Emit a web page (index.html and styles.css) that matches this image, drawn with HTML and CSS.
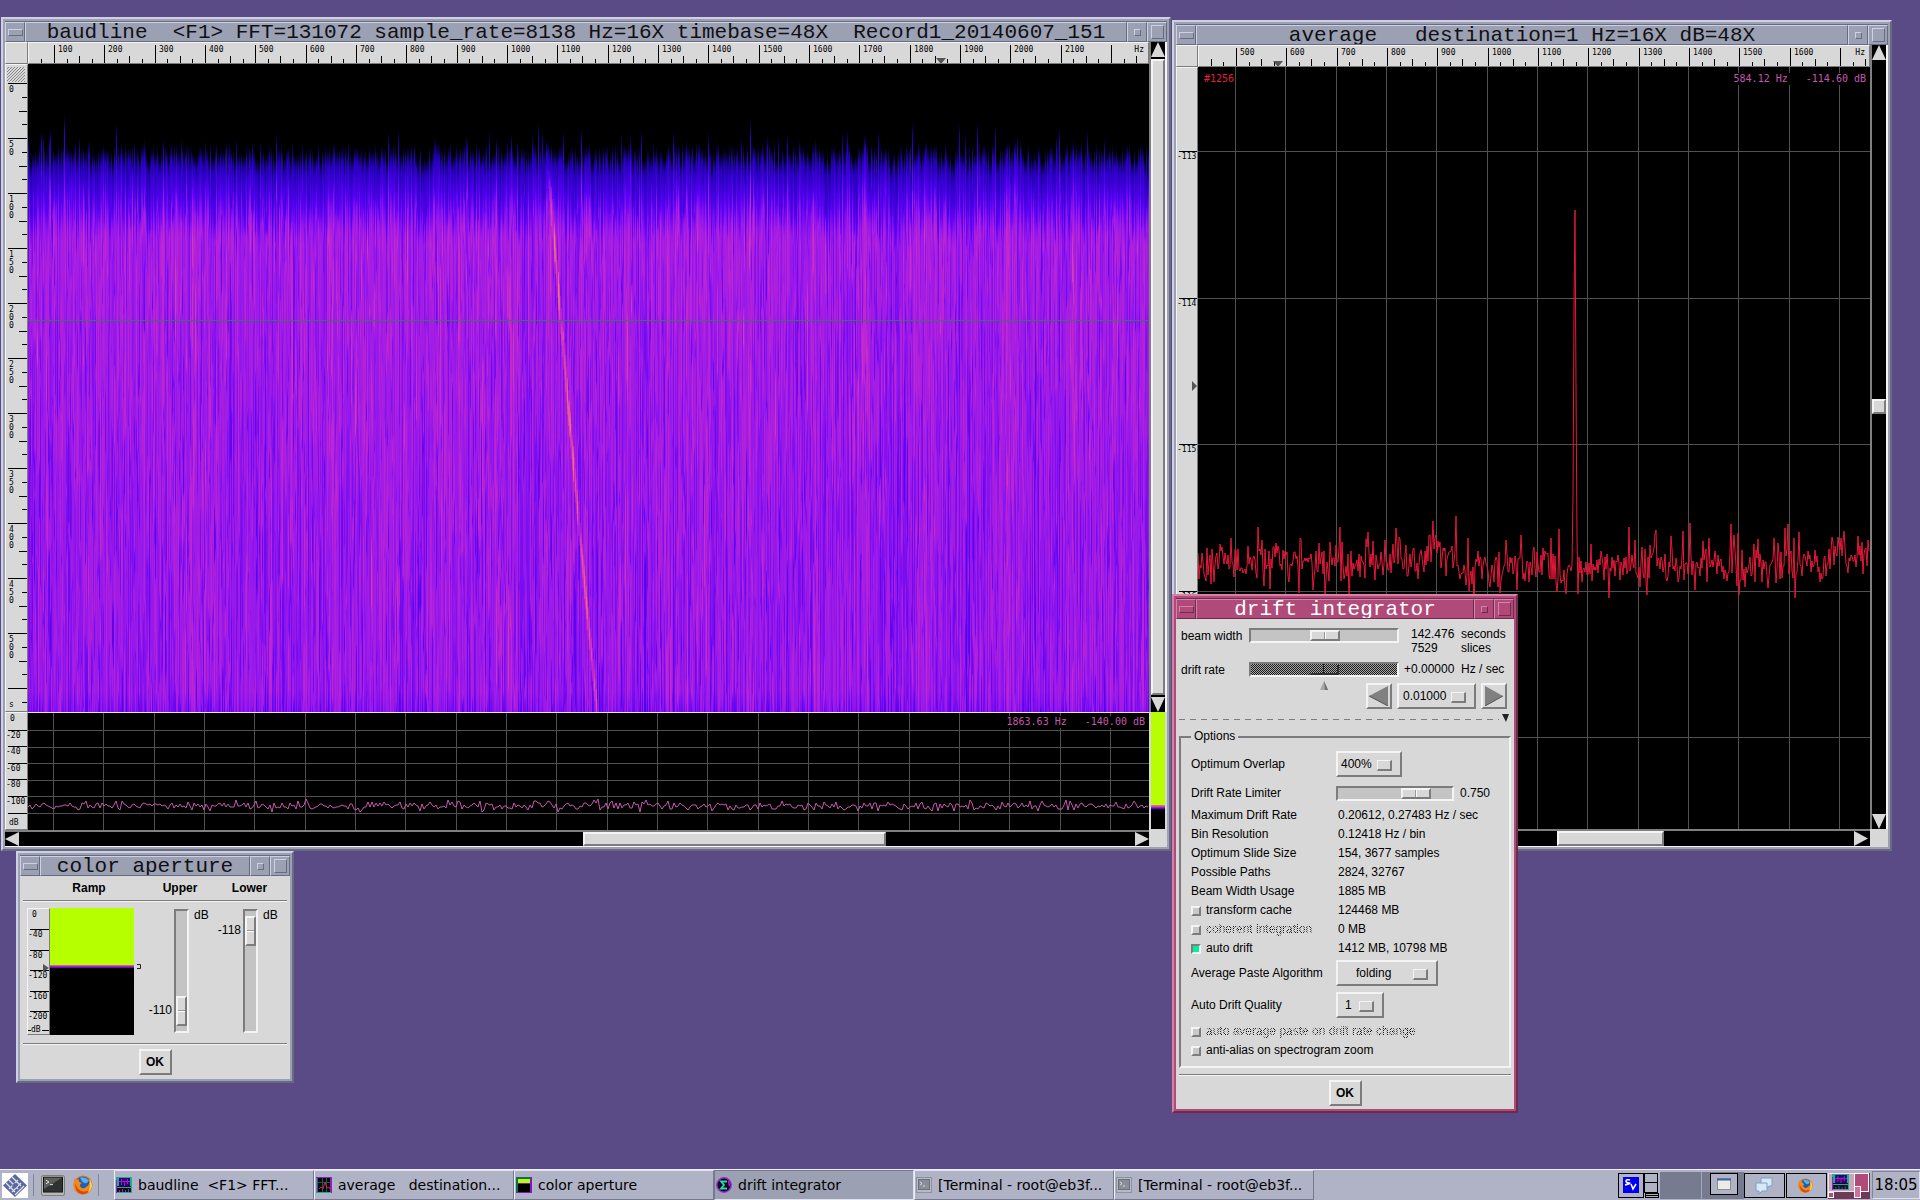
FILE: index.html
```html
<!DOCTYPE html>
<html lang="en">
<head>
<meta charset="utf-8">
<title>baudline</title>
<link rel="stylesheet" href="styles.css">
</head>
<body>
<svg class="defs" aria-hidden="true">
  <symbol id="firefox" viewBox="0 0 20 20">
    <circle cx="10" cy="10" r="9.5" fill="#e8761c"/>
    <circle cx="10" cy="8.500" r="7" fill="#1f5fae"/>
    <path d="M7 2.500Q12 1 16 5.500Q14 9 11 8Q8 6 7 2.500Z" fill="#58b0e8"/>
    <path d="M1.500 3Q3 5 6 4.500Q5 7 9 8Q6 9.500 7.500 12Q10 14.500 13 12Q17 10 16.500 4Q20 9 18.500 13Q16 19.500 10 19.500Q1 19 .5 10Q.5 6 1.500 3Z" fill="#f08a1d"/>
    <path d="M2 8Q4 15 10 16.500Q15 17 18 13Q15 19.500 9 19.200Q2 18 2 8Z" fill="#d64a12"/>
    <path d="M16.500 4Q20 9 18.500 13Q17.500 16 15 17.500Q18 11 16.500 4Z" fill="#fbd14a"/>
  </symbol>
  <symbol id="term" viewBox="0 0 24 24" preserveAspectRatio="none">
    <rect x=".5" y=".5" width="23" height="23" rx="2" fill="#b9b9b4" stroke="#77776f"/>
    <rect x="2.500" y="2.500" width="19" height="17" fill="#2e3230" stroke="#161816"/>
    <path d="M3 3H21L3 16Z" fill="#5c605c"/>
    <path d="M5 6l3 2-3 2M9 11h3" stroke="#e6e6e6" fill="none"/>
  </symbol>
  <symbol id="spectrum" viewBox="0 0 16 16" preserveAspectRatio="none">
    <rect width="16" height="16" fill="#18b090"/>
    <rect x="3" y="1" width="11" height="8" fill="#32006e"/>
    <path d="M3 4.500h11M5.500 2v6M8.500 4v5M11.500 2v5" stroke="#9a1cc8"/>
    <rect x="1" y="11" width="14" height="4" fill="#101018"/>
    <path d="M0 9.500H15" stroke="#0c0c30"/>
    <path d="M3.500 15v-2M6.500 15v-3M9.500 15v-2M12.500 15v-3" stroke="#9a1cc8"/>
    <path d="M.5 3V16" stroke="#9a1cc8"/>
  </symbol>
  <symbol id="avg" viewBox="0 0 16 16">
    <rect width="16" height="16" fill="#8a24b8"/>
    <rect x="2" y="1" width="12" height="14" fill="#08080c"/>
    <path d="M0 15.500H15M.5 1V15" stroke="#18b090"/>
    <path d="M2 5.500H14M6.500 1V15M10.500 1V15" stroke="#185c4c"/>
    <path d="M3 12l2-2 2 2 2-7 2 6 2-1 1 2" stroke="#d02040" fill="none"/>
  </symbol>
  <symbol id="ramp" viewBox="0 0 16 16">
    <rect width="16" height="16" fill="#8018c0"/>
    <path d="M0 0H15V2H2V15H0Z" fill="#0c7050"/>
    <rect x="2" y="2" width="12" height="4" fill="#b6ff00"/>
    <rect x="2" y="7" width="12" height="8" fill="#000"/>
  </symbol>
  <symbol id="sigma" viewBox="0 0 16 16">
    <circle cx="8" cy="8" r="7.200" fill="#12001e" stroke="#a028c8" stroke-width="1.500"/>
    <path d="M11 4.500H5L8 8 5 11.500H11" stroke="#18e0b0" stroke-width="1.800" fill="none"/>
    <path d="M12.500 4L13.500 9" stroke="#a028c8" stroke-width="1.500"/>
  </symbol>
  <symbol id="termgray" viewBox="0 0 16 16">
    <rect x=".5" y=".5" width="15" height="15" fill="#b7bac6" stroke="#8d91a0"/>
    <rect x="2.500" y="2.500" width="11" height="10" fill="#8a8e98" stroke="#6d717c"/>
    <path d="M4 5l2 1.500L4 8M7 9h2" stroke="#d8dae2" fill="none"/>
  </symbol>
</svg>

<main class="desktop">
  <section class="win win-average" aria-label="average">
    <header class="titlebar">
      <button class="tb tb-menu" aria-label="Menu"></button>
      <h1 class="title">average   destination=1 Hz=16X dB=48X</h1>
      <button class="tb tb-min" aria-label="Minimize"></button>
      <button class="tb tb-max" aria-label="Maximize"></button>
    </header>
    <div class="scope scope-average">
      <div class="corner"></div>
      <svg class="ruler ruler-h" id="avg-freq"></svg>
      <div class="scroll-v scroll-v-avg">
        <button class="arrow up" aria-label="Scroll up"></button>
        <div class="rail"><div class="thumb thumb-gain"></div></div>
        <button class="arrow down" aria-label="Scroll down"></button>
      </div>
      <svg class="ruler ruler-v" id="avg-db"></svg>
      <div class="plot">
        <svg class="graph" id="avg-graph"></svg>
        <span class="overlay overlay-left">#1256</span>
        <span class="overlay overlay-right">584.12 Hz   -114.60 dB</span>
      </div>
      <div class="scroll-h">
        <button class="arrow left" aria-label="Scroll left"></button>
        <div class="rail"><div class="thumb thumb-avg"></div></div>
        <button class="arrow right" aria-label="Scroll right"></button>
      </div>
    </div>
  </section>

  <section class="win win-baudline" aria-label="baudline">
    <header class="titlebar">
      <button class="tb tb-menu" aria-label="Menu"></button>
      <h1 class="title">baudline  &lt;F1&gt; FFT=131072 sample_rate=8138 Hz=16X timebase=48X  Record1_20140607_151</h1>
      <button class="tb tb-min" aria-label="Minimize"></button>
      <button class="tb tb-max" aria-label="Maximize"></button>
    </header>
    <div class="scope scope-baudline">
      <div class="corner"></div>
      <svg class="ruler ruler-h" id="main-freq"></svg>
      <div class="scroll-v">
        <button class="arrow up" aria-label="Scroll up"></button>
        <div class="rail"><div class="thumb thumb-full"></div></div>
        <button class="arrow down" aria-label="Scroll down"></button>
      </div>
      <svg class="ruler ruler-v" id="main-time"></svg>
      <div class="plot"><canvas class="graph" id="spectrogram"></canvas></div>
      <svg class="ruler ruler-v" id="main-db"></svg>
      <div class="plot plot-spectrum">
        <svg class="graph" id="main-graph"></svg>
        <span class="overlay overlay-right">1863.63 Hz   -140.00 dB</span>
      </div>
      <div class="mini-ramp"></div>
      <div class="scroll-h">
        <button class="arrow left" aria-label="Scroll left"></button>
        <div class="rail"><div class="thumb thumb-main"></div></div>
        <button class="arrow right" aria-label="Scroll right"></button>
      </div>
    </div>
  </section>

  <section class="win win-aperture" aria-label="color aperture">
    <header class="titlebar">
      <button class="tb tb-menu" aria-label="Menu"></button>
      <h1 class="title">color aperture</h1>
      <button class="tb tb-min" aria-label="Minimize"></button>
      <button class="tb tb-max" aria-label="Maximize"></button>
    </header>
    <div class="panel">
      <div class="heads"><b>Ramp</b><label for="upper">Upper</label><label for="lower">Lower</label></div>
      <div class="aperture">
        <svg class="ruler ruler-ramp" id="ramp-db"></svg>
        <div class="ramp"></div>
        <svg class="bracket" viewBox="0 0 4 6"><path d="M0 .5H3.500V4.500H0" fill="none" stroke="#222"/></svg>
        <output class="vout vout-upper" for="upper">-110</output>
        <input class="slider slider-v" id="upper" type="range" min="0" max="100" value="6">
        <span class="unit">dB</span>
        <output class="vout vout-lower" for="lower">-118</output>
        <input class="slider slider-v" id="lower" type="range" min="0" max="100" value="94">
        <span class="unit">dB</span>
      </div>
      <div class="actions"><button class="push">OK</button></div>
    </div>
  </section>

  <section class="win win-drift active" aria-label="drift integrator">
    <header class="titlebar">
      <button class="tb tb-menu" aria-label="Menu"></button>
      <h1 class="title">drift integrator</h1>
      <button class="tb tb-min" aria-label="Minimize"></button>
      <button class="tb tb-max" aria-label="Maximize"></button>
    </header>
    <div class="panel">
      <div class="top-grid">
        <label for="beam">beam width</label>
        <input class="slider" id="beam" type="range" min="0" max="100" value="51">
        <div class="beam-values"><span>142.476</span><span>seconds</span><span>7529</span><span>slices</span></div>
        <label for="rate">drift rate</label>
        <input class="slider" id="rate" type="range" min="0" max="100" value="50" disabled>
        <div class="rate-values"><span>+0.00000</span><span>Hz / sec</span></div>
      </div>
      <div class="stepper">
        <svg class="pointer" viewBox="0 0 8 9"><path d="M4 0L8 9H0Z" fill="#a8a8a8"/><path d="M4 0L8 9H5Z" fill="#707070"/></svg>
        <button class="push step" aria-label="Decrease drift rate"><svg viewBox="0 0 20 20"><path d="M0 10L19 0V20Z" fill="#808080"/><path d="M0 10L19 20" stroke="#555"/></svg></button>
        <span class="option option-step"><select aria-label="Step"><option>0.01000</option></select></span>
        <button class="push step" aria-label="Increase drift rate"><svg viewBox="0 0 20 20"><path d="M19 10L1 0V20Z" fill="#808080"/><path d="M19 10L1 20" stroke="#555"/></svg></button>
      </div>
      <div class="tear"><svg viewBox="0 0 7 8"><path d="M0 0H7L4 8Z" fill="#222"/></svg></div>
      <fieldset class="options">
        <legend>Options</legend>
        <div class="row tall"><label for="overlap">Optimum Overlap</label><span class="option option-overlap"><select id="overlap"><option>400%</option></select></span></div>
        <div class="row mid"><label for="limiter">Drift Rate Limiter</label><input class="slider slider-short" id="limiter" type="range" min="0" max="100" value="75"><output for="limiter">0.750</output></div>
        <div class="row"><span>Maximum Drift Rate</span><span class="val">0.20612, 0.27483 Hz / sec</span></div>
        <div class="row"><span>Bin Resolution</span><span class="val">0.12418 Hz / bin</span></div>
        <div class="row"><span>Optimum Slide Size</span><span class="val">154, 3677 samples</span></div>
        <div class="row"><span>Possible Paths</span><span class="val">2824, 32767</span></div>
        <div class="row"><span>Beam Width Usage</span><span class="val">1885 MB</span></div>
        <div class="row"><label><input type="checkbox">transform cache</label><span class="val">124468 MB</span></div>
        <div class="row"><label class="off"><input type="checkbox" disabled><span>coherent integration</span></label><span class="val">0 MB</span></div>
        <div class="row"><label><input type="checkbox" checked>auto drift</label><span class="val">1412 MB, 10798 MB</span></div>
        <div class="row tall"><label for="paste">Average Paste Algorithm</label><span class="option option-paste"><select id="paste"><option>folding</option></select></span></div>
        <div class="row tall"><label for="quality">Auto Drift Quality</label><span class="option option-quality"><select id="quality"><option>1</option></select></span></div>
        <div class="row wide"><label class="off"><input type="checkbox" disabled><span>auto average paste on drift rate change</span></label></div>
        <div class="row wide"><label><input type="checkbox">anti-alias on spectrogram zoom</label></div>
      </fieldset>
      <div class="actions"><button class="push">OK</button></div>
    </div>
  </section>
</main>

<footer class="taskbar">
  <div class="launch">
    <button class="start" aria-label="Applications"><svg viewBox="0 0 26 25"><rect width="26" height="25" fill="#fff"/><path d="M13 1L25 12.500 13 24 1 12.500Z" fill="#5a68a0"/><path d="M7 7L16 16M10 4L19 13M4 10L13 19M16 7L7 16M19 10L10 19M22 13L13 22" stroke="#dfe2f2" stroke-width="1.200" fill="none"/><path d="M10 12.500L13 9.500 16 12.500 13 15.500Z" fill="#5a68a0"/></svg></button>
    <i class="sep"></i>
    <button class="quick" aria-label="Terminal"><svg width="24" height="21"><use href="#term"/></svg></button>
    <button class="quick" aria-label="Firefox"><svg width="20" height="20"><use href="#firefox"/></svg></button>
    <i class="sep"></i>
  </div>
  <nav class="tasks">
    <button class="task"><svg width="16" height="16"><use href="#spectrum"/></svg>baudline  &lt;F1&gt; FFT...</button>
    <button class="task"><svg width="16" height="16"><use href="#avg"/></svg>average   destination...</button>
    <button class="task"><svg width="16" height="16"><use href="#ramp"/></svg>color aperture</button>
    <button class="task current"><svg width="16" height="16"><use href="#sigma"/></svg>drift integrator</button>
    <button class="task"><svg width="16" height="16"><use href="#termgray"/></svg>[Terminal - root@eb3f...</button>
    <button class="task"><svg width="16" height="16"><use href="#termgray"/></svg>[Terminal - root@eb3f...</button>
  </nav>
  <div class="tray">
    <svg class="pager" width="252" height="27" viewBox="0 0 252 27" role="img" aria-label="Workspaces">
      <rect x="42" width="84" height="27" fill="#777b90"/>
      <path d="M83.500 0V27" stroke="#a4a7ba"/>
      <g fill="#b0b3c6" stroke="#000"><rect x=".5" y="1.500" width="25" height="24"/><rect x="26.500" y="1.500" width="13" height="9"/><rect x="26.500" y="10.500" width="13" height="10"/><rect x="27.500" y="21.500" width="13" height="4"/><path d="M27 23.500H41"/><rect x="92.500" y="1.500" width="27" height="21"/><rect x="126.500" y="1.500" width="40" height="24"/><rect x="168.500" y="1.500" width="40" height="24"/></g>
      <rect x="5" y="5" width="16" height="16" fill="#0000ee"/>
      <path d="M12 8Q8 7 8 9T11 11T7 13M13 12L15 17 18 12" stroke="#fff" stroke-width="1.500" fill="none"/>
      <rect x="99.500" y="6.500" width="13" height="11" fill="#ecece6" stroke="#8b8f90"/><path d="M99 7.500H113" stroke="#3a65a8" stroke-width="2"/>
      <path d="M143 6h11v8h-3l-2 3v-3h-6z" fill="#d7e8f6" stroke="#7f9fc0"/><path d="M138 11h11v8h-5l-3 3v-3h-3z" fill="#d7e8f6" stroke="#7f9fc0"/>
      <use href="#firefox" x="180" y="6" width="15" height="15"/>
      <rect x="210" y="1" width="42" height="26" fill="#6f3a58"/>
      <rect x="210.500" y="1.500" width="26" height="18" fill="#c7a6bc" stroke="#e8e4f0"/>
      <use href="#spectrum" x="214" y="2" width="17" height="16"/>
      <rect x="236.500" y="1.500" width="14" height="18" fill="#b04a78" stroke="#fff"/>
      <rect x="236.500" y="14.500" width="6" height="11" fill="#d070a0" stroke="#fff"/>
      <rect x="210.500" y="20.500" width="5" height="5" fill="#b04a78" stroke="#fff"/>
    </svg>
    <time class="clock">18:05</time>
  </div>
</footer>
<script src="script.js"></script>
</body>
</html>
```
FILE: styles.css
```css
* { box-sizing: border-box; }
html, body { height: 100%; }
body {
  --face: #9ba0b2; --light: #cfd1e3; --dark: #686c80;
  --gray: #d8d8d8; --hi: #f4f4f4; --lo: #7c7c7c;
  margin: 0; display: flex; flex-direction: column; overflow: hidden;
  background: #5a4a85; color: #000;
  font: 12px/15px "Liberation Sans", Arial, sans-serif;
}
button, select, input { font: inherit; color: inherit; margin: 0; padding: 0; border-radius: 0; }
.defs { display: none; }
.desktop { flex: 1; position: relative; overflow: hidden; min-height: 0; }

/* Window frames */
.win {
  position: absolute; display: flex; flex-direction: column;
  padding: 2px; background: var(--face);
  border: 2px solid; border-color: var(--light) var(--dark) var(--dark) var(--light);
}
.win::before { content: ""; height: 1px; flex: none; background: var(--dark); }
.win-baudline { left: 1px; top: 17px; width: 1170px; height: 834px; }
.win-average { left: 1172px; top: 20px; width: 720px; height: 831px; }
.win-aperture { left: 16px; top: 851px; width: 278px; height: 232px; }
.win-drift { left: 1172px; top: 594px; width: 346px; height: 519px; }
.active { --face: #b04a78; --light: #d880a8; --dark: #6e2c4c; }
.titlebar {
  flex: none; height: 20px; display: flex; background: var(--face);
}
.title {
  flex: 1; min-width: 0; margin: 0; overflow: hidden; text-align: center; white-space: pre;
  font: 400 21px/19px "Liberation Mono", "Courier New", monospace; color: #101014;
  border: 1px solid; border-color: var(--light) var(--dark) var(--dark) var(--light);
}
.active .title { color: #fff; }
.tb {
  width: 20px; height: 20px; display: grid; place-items: center; background: var(--face);
  border: 1px solid; border-color: var(--light) var(--dark) var(--dark) var(--light);
}
.tb::before { content: ""; border: 1px solid; border-color: var(--light) var(--dark) var(--dark) var(--light); }
.tb-menu::before { width: 13px; height: 5px; }
.tb-min::before { width: 5px; height: 5px; }
.tb-max::before { width: 11px; height: 12px; }

/* Signal displays */
.scope { flex: 1; min-height: 0; display: grid; background: var(--gray); }
.scope-baudline { grid-template: 22px 1fr 118px 17px / 23px 1fr 18px; }
.scope-average { grid-template: 22px 1fr 18px / 22px 1fr 18px; }
.corner, .ruler { background: var(--gray); border: 1px solid; border-color: var(--hi) var(--lo) var(--lo) var(--hi); }
.ruler { display: block; width: 100%; height: 100%; overflow: hidden; font: 8px "DejaVu Sans Mono", monospace; }
.plot { position: relative; background: #000; min-width: 0; min-height: 0; overflow: hidden; }
.plot-spectrum { border-top: 1px solid #f0e0ff; }
.graph { display: block; width: 100%; height: 100%; }
.overlay {
  position: absolute; top: 3px; white-space: pre; background: #000; color: #c458ac;
  font: 10px/12px "DejaVu Sans Mono", monospace;
}
.overlay-right { right: 4px; }
.overlay-left { left: 6px; color: #e02040; }
.scope-average .overlay { top: 6px; }
.scroll-v { grid-column: 3; grid-row: 1 / 3; display: flex; flex-direction: column; background: #000; border: solid; border-width: 0 2px; border-color: #808080 var(--hi) #808080 #808080; }
.scroll-h { grid-column: 1 / 3; display: flex; background: #000; border-top: 2px solid #808080; border-bottom: 1px solid var(--hi); }
.scope-average .scroll-h { padding: 0 2px; }
.rail { flex: 1; display: flex; }
.scroll-v .rail { flex-direction: column; padding: 2px 0; }
.thumb { background: var(--gray); border: 2px solid; border-color: var(--hi) var(--lo) var(--lo) var(--hi); }
.thumb-full { flex: 1; }
.thumb-gain { height: 15px; margin-top: 337px; }
.thumb-main { width: 303px; margin-left: 564px; }
.thumb-avg { width: 107px; margin-left: 365px; }
.arrow { flex: none; border: 0; background: var(--gray); }
.scroll-v .arrow { width: 100%; height: 15px; }
.scroll-h .arrow { width: 14px; }
.up { clip-path: polygon(50% 0, 100% 100%, 0 100%); }
.down { clip-path: polygon(0 0, 100% 0, 50% 100%); }
.left { clip-path: polygon(0 50%, 100% 0, 100% 100%); }
.right { clip-path: polygon(0 0, 100% 50%, 0 100%); }
.mini-ramp {
  margin: 0 2px 1px 2px;
  background: linear-gradient(#b6ff00 93px, #f08060 93px, #c030d0 95px, #3000a0 97px, #000 98px);
}

/* Dialog panels */
.panel { flex: 1; display: flex; flex-direction: column; background: var(--gray); }
.win-aperture .panel { padding: 0 3px 0 3px; }
.heads { display: grid; grid-template-columns: 132px 50px 1fr; height: 25px; align-items: center; text-align: center; border-bottom: 1px solid var(--lo); box-shadow: 0 1px var(--hi); font-weight: 700; }
.heads label:last-child { padding-left: 7px; }
.aperture { display: flex; align-items: flex-start; height: 142px; padding: 7px 0 0 4px; }
.ruler-ramp { width: 23px; height: 127px; flex: none; }
.ramp { width: 84px; height: 127px; flex: none; background: linear-gradient(#b6ff00 57px, #f08060 57px, #c030d0 58px, #5000c0 60px, #000 60px); }
.bracket { width: 4px; height: 6px; margin: 56px 0 0 3px; flex: none; }
.vout { width: 33px; text-align: right; padding-right: 2px; flex: none; }
.vout-upper { margin-top: 95px; }
.vout-lower { margin-top: 15px; }
.unit { width: 16px; margin-left: 5px; }
.actions { display: flex; justify-content: center; padding-top: 5px; border-top: 1px solid var(--lo); box-shadow: inset 0 1px var(--hi); }
.push {
  width: 33px; height: 26px; background: var(--gray); font-weight: 700;
  border: 2px solid; border-color: var(--hi) var(--lo) var(--lo) var(--hi);
}
.slider {
  appearance: none; width: 150px; height: 15px; background: #c4c4c4;
  border: 2px solid; border-color: var(--lo) var(--hi) var(--hi) var(--lo);
}
.slider::-webkit-slider-thumb {
  appearance: none; width: 30px; height: 11px; border: 2px solid;
  border-color: var(--hi) var(--lo) var(--lo) var(--hi);
  background: linear-gradient(90deg, var(--gray) 12px, #999 12px, #999 13px, #fff 13px, #fff 14px, var(--gray) 14px);
}
.slider-short { width: 118px; }
.slider-v { writing-mode: vertical-lr; direction: rtl; width: 15px; height: 124px; margin-top: 1px; flex: none; }
.slider-v::-webkit-slider-thumb {
  width: 11px; height: 30px;
  background: linear-gradient(var(--gray) 12px, #999 12px, #999 13px, #fff 13px, #fff 14px, var(--gray) 14px);
}
.slider:disabled { background: repeating-conic-gradient(#1c1c1c 0 25%, #a8a8a8 0 50%) 0 0 / 2px 2px; }
.slider:disabled::-webkit-slider-thumb {
  background: linear-gradient(90deg, transparent 12px, #222 12px, #222 13px, transparent 13px);
  border-color: transparent #303030 #303030 transparent;
}

/* Drift integrator */
.win-drift .panel { padding: 0 3px; }
.top-grid { display: grid; grid-template-columns: 68px 150px 1fr; grid-template-rows: 34px 22px; padding: 6px 0 0 2px; align-items: start; }
.top-grid .slider { margin-top: 3px; }
.top-grid label { padding-top: 4px; }
.beam-values { display: grid; grid-template-columns: 50px 1fr; padding: 2px 0 0 12px; line-height: 14px; }
.rate-values { display: grid; grid-template-columns: 57px 1fr; padding: 3px 0 0 5px; }
.stepper { display: flex; align-items: flex-end; gap: 5px; height: 28px; padding: 0 2px 0 141px; }
.pointer { width: 8px; height: 9px; margin-right: 33px; flex: none; align-self: flex-start; }
.step { width: 26px; flex: none; display: grid; place-items: center; }
.step svg { width: 20px; height: 20px; }
.option { position: relative; display: block; height: 26px; flex: none; }
.option select {
  appearance: none; width: 100%; height: 100%; background: var(--gray); outline: 0;
  border: 2px solid; border-color: var(--hi) var(--lo) var(--lo) var(--hi); padding: 0 4px;
}
.option::after {
  content: ""; position: absolute; right: 10px; top: 9px; width: 12px; height: 8px;
  background: var(--gray); border: 2px solid; border-color: var(--hi) var(--lo) var(--lo) var(--hi);
  border-width: 1px 2px 2px 1px;
}
.option-step { width: 79px; }
.option-overlap { width: 66px; }
.option-overlap select { padding: 0 3px; }
.option-paste { width: 102px; }
.option-paste select { padding: 0 18px; }
.option-quality { width: 48px; }
.option-quality select { padding: 0 7px; }
.tear {
  height: 16px; margin-top: 1px; display: flex; justify-content: flex-end; align-items: center; padding-right: 2px;
  background: repeating-linear-gradient(90deg, var(--lo) 0 6px, transparent 6px 11px) 0 9px / calc(100% - 12px) 1px no-repeat;
}
.tear svg { width: 7px; height: 8px; }
.options {
  min-width: 0; margin: 3px 0 6px; padding: 5px 0 6px 10px;
  border: 2px solid; border-color: var(--lo) var(--hi) var(--hi) var(--lo);
}
.options legend { padding: 0 3px; line-height: 15px; }
.row { height: 19px; display: grid; grid-template-columns: 145px auto 1fr; align-items: center; white-space: nowrap; }
.row.tall { height: 32px; padding-bottom: 2px; }
.row.mid { height: 25px; }
.row.wide { grid-template-columns: 1fr; }
.row output { padding-left: 6px; }
.val { padding-left: 2px; }
.row label { display: flex; align-items: center; }
input[type="checkbox"] {
  appearance: none; width: 10px; height: 10px; margin: 0 5px 0 0; background: #c8c8c8;
  border: 2px solid; border-color: var(--hi) var(--lo) var(--lo) var(--hi);
}
input[type="checkbox"]:checked { background: #00f0a0; border-color: var(--lo) var(--hi) var(--hi) var(--lo); }
.off span { color: transparent; background: repeating-conic-gradient(#000 0 25%, transparent 0 50%) 0 0 / 2px 2px; background-clip: text; }

/* Taskbar */
.taskbar {
  flex: none; height: 31px; display: flex; align-items: stretch; background: #b0b3c6; border-top: 1px solid #eceefa;
  font: 14px/18px "DejaVu Sans", sans-serif;
}
.launch { width: 114px; display: flex; align-items: center; padding-left: 2px; flex: none; }
.start, .quick { border: 0; background: none; display: block; line-height: 0; }
.start svg { width: 26px; height: 25px; }
.sep { width: 1px; height: 22px; background: #8084a0; margin: 0 7px 0 5px; }
.quick + .quick { margin-left: 8px; }
.tasks { flex: 1; display: flex; min-width: 0; }
.task {
  flex: 0 1 200px; min-width: 0; display: flex; align-items: center; gap: 6px; overflow: hidden; white-space: pre;
  background: #b0b3c6; padding: 0 1px; text-align: left;
  border: 1px solid; border-color: #dfe1ee #747890 #747890 #eceefa;
}
.task svg { flex: none; }
.current { background: #9ba0b2; border-color: #747890 #dfe1ee #dfe1ee #747890; }
.tray { display: flex; align-items: center; flex: none; gap: 2px; }
.clock { width: 48px; height: 28px; font-size: 15px; line-height: 27px; text-align: center; border: 1px solid; border-color: #808498 #dfe1ee #dfe1ee #808498; }
```
FILE: script.js
```javascript
const NS = "http://www.w3.org/2000/svg";

// Small seeded generator, so that the displays look the same on each load.
function rng(seed) {
  return () => {
    seed = (seed + 0x6d2b79f5) | 0;
    let t = Math.imul(seed ^ (seed >>> 15), 1 | seed);
    t = (t + Math.imul(t ^ (t >>> 7), 61 | t)) ^ t;
    return ((t ^ (t >>> 14)) >>> 0) / 4294967296;
  };
}

function add(svg, name, attrs, text) {
  const el = document.createElementNS(NS, name);
  for (const k in attrs) el.setAttribute(k, attrs[k]);
  if (text !== undefined) el.textContent = text;
  svg.append(el);
  return el;
}
const get = (id) => document.getElementById(id);
const line = (svg, d, stroke) => add(svg, "path", { d, stroke, fill: "none", "shape-rendering": "crispEdges" });

const STEP = 50.33; // pixels for each 100 Hz

function frequencyRuler(svg, x0, first, last, marker) {
  const w = svg.clientWidth;
  let d = "";
  for (let k = -4; x0 + k * STEP / 4 < w - 2; k++) {
    const x = Math.round(x0 + k * STEP / 4) + 0.5;
    if (x < 2) continue;
    d += `M${x} ${k % 4 === 0 ? 2 : k % 2 === 0 ? 13 : 16}V20`;
  }
  line(svg, d, "#000");
  for (let f = first; f <= last; f += 100) {
    add(svg, "text", { x: Math.round(x0 + (f - first) / 100 * STEP) + 4, y: 9 }, f);
  }
  add(svg, "text", { x: w - 4, y: 9, "text-anchor": "end" }, "Hz");
  add(svg, "path", { d: `M${marker - 5} 15h10l-5 6z`, fill: "#555" });
}

function timeRuler(svg) {
  const h = svg.clientHeight;
  for (let k = -12; k < 20; k += 3) {
    const a = Math.max(k, 1), b = Math.min(k + 15, 19);
    add(svg, "path", { d: `M${a} ${17 - (a - k)}L${b} ${17 - (b - k)}`, stroke: "#888" });
  }
  let d = "";
  for (let k = 0; 18 + k * 13.75 < h - 2; k++) {
    const y = Math.round(18 + k * 13.75) + 0.5;
    d += `M${k % 4 === 0 ? 2 : k % 2 === 0 ? 13 : 16} ${y}H21`;
  }
  line(svg, d, "#000");
  for (let t = 0; t <= 500; t += 50) {
    [...String(t)].forEach((c, i) => add(svg, "text", { x: 3, y: Math.round(27 + t * 1.1 + i * 8) }, c));
  }
  add(svg, "text", { x: 3, y: h - 4 }, "s");
}

function levelRuler(svg, y0, step, labels, x) {
  labels.forEach((label, i) => {
    if (i || x) line(svg, `M2 ${Math.round(y0 + i * step) + 0.5}H21`, "#000");
    add(svg, "text", { x: label === "0" ? 4 : 0, y: Math.round(y0 + i * step) + 8 }, label);
  });
}

function grid(svg, x0, y0, dy) {
  const w = svg.clientWidth, h = svg.clientHeight;
  let d = "";
  for (let x = x0; x < w; x += STEP) d += `M${Math.round(x) + 0.5} 0V${h}`;
  for (let y = y0; y < h; y += dy) d += `M0 ${Math.round(y) + 0.5}H${w}`;
  line(svg, d, "#505050");
}

// Colour map of the spectrogram: black, blue, violet, magenta, orange.
const MAP = [[0, 0, 0, 0], [0.1, 10, 0, 80], [0.25, 40, 0, 190], [0.45, 86, 0, 242], [0.62, 150, 24, 236], [0.8, 196, 40, 205], [1, 250, 110, 110]];
function colour(v) {
  v = Math.max(0, Math.min(1, v));
  let i = 1;
  while (i < MAP.length - 1 && v > MAP[i][0]) i++;
  const a = MAP[i - 1], b = MAP[i], t = (v - a[0]) / (b[0] - a[0]);
  return [1, 2, 3].map((k) => a[k] + (b[k] - a[k]) * t);
}

function spectrogram(cv) {
  const w = cv.width = cv.clientWidth, h = cv.height = cv.clientHeight;
  const ctx = cv.getContext("2d"), img = ctx.createImageData(w, h), r = rng(7);
  let wide = 0;
  for (let x = 0; x < w; x++) {
    wide = wide * 0.75 + (r() - 0.5) * 0.05;
    const col = (r() - 0.5) * 0.06 + wide;
    const spike = r() > 0.93 ? r() * 26 : 0;
    const edge = 98 - r() * 20 - spike - wide * 100;
    let n = 0, target = 0;
    for (let y = 0; y < h; y++) {
      if (r() < 0.025) target = (r() + r() - 1) * 0.17;
      n += (target - n) * 0.15;
      const t = y - edge;
      let v = t < 0 ? 0 : t < 14 ? t / 14 * 0.22 : t < 85 ? 0.22 + (t - 14) / 71 * 0.45 : 0.67 - Math.min(0.045, (t - 85) / 7000);
      if (t > 0) v += (col + n) * Math.min(1, t / 60);
      if (y > h - 22) v -= (y - h + 22) / 22 * 0.06;
      const centre = 520 + (y - 105) * 0.09 - Math.sin((y - 105) / 180) * 1.5;
      const off = Math.abs(x - centre);
      if (y > 105 && off < 1.6) v += 0.26 * (1 - off / 3) * Math.min(1, (y - 95) / 40);
      const c = colour(v), p = (y * w + x) * 4;
      img.data[p] = c[0]; img.data[p + 1] = c[1]; img.data[p + 2] = c[2]; img.data[p + 3] = 255;
    }
  }
  ctx.putImageData(img, 0, 0);
  ctx.fillStyle = "#3f7068";
  ctx.fillRect(0, 256, w, 1);
}

function averageTrace(svg) {
  const r = rng(31), w = svg.clientWidth;
  let d = "", level = 0;
  for (let x = 0; x < w; x++) {
    level = level * 0.82 + (r() - 0.5) * 14;
    let y = 497 + level - (r() - 0.5) * 26 - Math.pow(r(), 7) * 36 + Math.pow(r(), 12) * 24;
    if (x > 374 && x < 380) y = [430, 240, 143, 320, 470][x - 375];
    d += `${x ? "L" : "M"}${x} ${Math.round(y)}`;
  }
  add(svg, "path", { d, stroke: "#e8183a", fill: "none" });
}

function spectrumTrace(svg) {
  const r = rng(5), w = svg.clientWidth;
  let d = "";
  for (let x = 0; x < w; x += 2) d += `${x ? "L" : "M"}${x} ${Math.round(93 + (r() + r() + r() - 1.5) * 5)}`;
  add(svg, "path", { d, stroke: "#c458ac", fill: "none" });
}

frequencyRuler(get("main-freq"), 25, 100, 2100, 912);
frequencyRuler(get("avg-freq"), 37, 500, 1600, 79);
timeRuler(get("main-time"));
levelRuler(get("main-db"), 0, 16.6, ["0", "-20", "-40", "-60", "-80", "-100", ""]);
add(get("main-db"), "text", { x: 3, y: 112 }, "dB");
levelRuler(get("avg-db"), 83, 146.5, ["-113", "-114", "-115", "-116", "-117"], true);
add(get("avg-db"), "path", { d: "M15 313v10l5-5z", fill: "#555" });
levelRuler(get("ramp-db"), 0, 20.4, ["0", "-40", "-80", "-120", "-160", "-200"]);
add(get("ramp-db"), "text", { x: 3, y: 123 }, "dB");
line(get("ramp-db"), "M0 121.500H3M14 121.500H21", "#000");
add(get("ramp-db"), "path", { d: "M15 55v8l6-4z", fill: "#555" });
grid(get("avg-graph"), 37, 84, 146.5);
grid(get("main-graph"), 25, 17, 16.6);
averageTrace(get("avg-graph"));
spectrumTrace(get("main-graph"));
spectrogram(get("spectrogram"));
```
